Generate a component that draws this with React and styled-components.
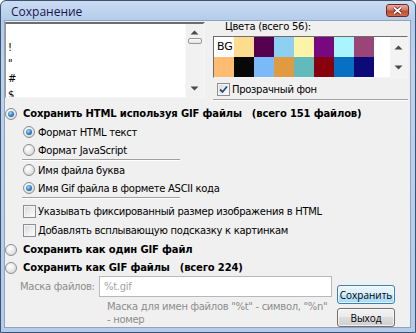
import React from 'react'
import styled, { createGlobalStyle } from 'styled-components'

const GlobalStyle = createGlobalStyle`
  html, body { margin: 0; padding: 0; background: #ffffff; }
  body { width: 416px; height: 333px; overflow: hidden; }
`

const listItems = ['\u00a0', '!', '"', '#', '$']

const palette = [
  ['#ffffff', '#fddc8e', '#560050', '#8ed0f2', '#fcf4a8', '#78087f', '#aaf4fd', '#9a4578'],
  ['#fcbd72', '#080808', '#7abaf8', '#e09a42', '#62baba', '#86000e', '#0870c2', '#0c0a78'],
  ['#a8e4a0', '#3a5ab8', '#c8c8f0', '#5a4fb8', '#8fd8b8', '#4878c8', '#5080d0', '#2a3a98'],
]

const Window = styled.div`
  width: 416px;
  height: 333px;
  box-sizing: border-box;
  border: 1px solid #3d5270;
  border-radius: 6px 6px 0 0;
  background: linear-gradient(to bottom, #cadcf2 0px, #b2cbea 21px, #bcd2ed 60px, #b4cbe9 100%);
  padding: 0 4px 4px 3px;
  display: flex;
  flex-direction: column;
  font-family: "DejaVu Sans", sans-serif;
  font-size: 10px;
  letter-spacing: -0.3px;
  color: #000;
`

const TitleBar = styled.div`
  height: 21px;
  display: flex;
  align-items: center;
  justify-content: space-between;
  padding: 0 2px 0 7px;
`

const Title = styled.span`
  font-family: "Open Sans", "Noto Sans", sans-serif;
  font-size: 12px;
  letter-spacing: 0;
  color: #17174f;
  padding-top: 2px;
`

const CloseButton = styled.div`
  width: 23px;
  height: 13px;
  box-sizing: border-box;
  border: 1px solid #6b2a22;
  border-radius: 3px;
  background: linear-gradient(to bottom, #e8ab9c 0%, #d57a66 45%, #c4472f 55%, #d06d52 100%);
  display: flex;
  align-items: center;
  justify-content: center;
`

const Client = styled.div`
  flex: 1;
  box-sizing: border-box;
  background: #f0f0f0;
  border: 1px solid #8fa3bd;
  display: flex;
  flex-direction: column;
`

const TopSection = styled.div`
  display: grid;
  grid-template-columns: 200px 197px;
  column-gap: 8px;
`

const ListBox = styled.div`
  margin-top: 1px;
  height: 76px;
  box-sizing: border-box;
  background: #ffffff;
  border-style: solid;
  border-width: 2px 2px 1px 1px;
  border-color: #6d6d6d #f4f4f4 #f4f4f4 #9a9a9a;
  display: flex;
  overflow: hidden;
`

const ListItems = styled.div`
  flex: 1;
  padding-left: 2px;
  padding-top: 1px;
  line-height: 15.4px;
  font-size: 10px;
`

const ScrollBar = styled.div`
  width: 17px;
  flex: none;
  background: #f1f1f1;
  border-left: 1px solid #f8f8f8;
  display: flex;
  flex-direction: column;
  align-items: center;
  justify-content: space-between;
`

const ScrollButton = styled.div`
  width: 17px;
  height: ${p => p.$h || 17}px;
  display: flex;
  align-items: center;
  justify-content: center;
`

const Thumb = styled.div`
  width: 14px;
  height: 6px;
  box-sizing: border-box;
  border: 1px solid #9a9a9a;
  border-radius: 2px;
  background: linear-gradient(to bottom, #fbfbfb, #e2e2e2);
  margin-top: -17px;
  margin-bottom: 23px;
`

const ColorsPanel = styled.div`
  display: flex;
  flex-direction: column;
`

const ColorsLabel = styled.div`
  height: 12px;
  line-height: 12px;
  padding-left: 12px;
`

const ColorBox = styled.div`
  margin-top: 3px;
  width: 195px;
  height: 42px;
  box-sizing: border-box;
  background: #ffffff;
  border-style: solid;
  border-width: 1px;
  border-color: #6d6d6d #f4f4f4 #f4f4f4 #6d6d6d;
  display: flex;
  overflow: hidden;
`

const ColorGrid = styled.div`
  display: grid;
  grid-template-columns: repeat(8, 20px);
  grid-auto-rows: 20px;
  width: 176px;
  align-content: start;
`

const Swatch = styled.div`
  background: ${p => p.$color};
  font-size: 11px;
  line-height: 20px;
  padding-left: 3px;
  letter-spacing: 0;
`

const GridScroll = styled.div`
  width: 17px;
  flex: none;
  margin-left: auto;
  background: #f3f3f3;
  display: flex;
  flex-direction: column;
`

const Row = styled.label`
  display: flex;
  align-items: center;
  height: ${p => p.$h || 19}px;
  margin-top: ${p => p.$mt || 0}px;
  padding-left: ${p => p.$indent || 0}px;
  gap: ${p => p.$gap || 3}px;
  font-weight: ${p => (p.$bold ? 700 : 400)};
  letter-spacing: ${p => (p.$bold ? '-0.15px' : '-0.3px')};
  white-space: pre;
`

const RadioMark = styled.span`
  width: 12px;
  height: 12px;
  flex: none;
  box-sizing: border-box;
  border-radius: 50%;
  border: 1px solid #8b8e93;
  background: radial-gradient(circle at 40% 35%, #ffffff 0%, #e9e9e9 50%, #c9c9c9 100%);
  position: relative;
  &::after {
    content: '';
    display: ${p => (p.$checked ? 'block' : 'none')};
    position: absolute;
    left: 2px;
    top: 2px;
    width: 6px;
    height: 6px;
    border-radius: 50%;
    background: radial-gradient(circle at 40% 35%, #a8dcff 0%, #3f8ad2 45%, #0d3f78 100%);
  }
`

const CheckMark = styled.span`
  width: 13px;
  height: 13px;
  flex: none;
  box-sizing: border-box;
  border: 1px solid #8b8e93;
  background: linear-gradient(135deg, #d7d7d7 0%, #f4f4f4 70%, #ffffff 100%);
  box-shadow: inset 0 0 0 1px #f4f4f4;
  display: flex;
  align-items: center;
  justify-content: center;
`

const Separator = styled.div`
  height: 0;
  border-top: 1px solid #a0a0a0;
  border-bottom: 1px solid #ffffff;
  margin-left: ${p => p.$left || 0}px;
  width: ${p => p.$w}px;
  margin-bottom: ${p => p.$mb || 0}px;
`

const Options = styled.div`
  display: flex;
  flex-direction: column;
  margin-top: 3px;
`

const Bottom = styled.div`
  display: grid;
  grid-template-columns: 94px 233px 63px;
  grid-template-rows: 21px auto;
`

const MaskLabel = styled.div`
  color: #8d8d8d;
  padding-left: 15px;
  line-height: 21px;
`

const MaskInput = styled.div`
  box-sizing: border-box;
  height: 21px;
  border: 1px solid #b5b9bd;
  background: #ffffff;
  color: #a3a3a3;
  padding-left: 4px;
  line-height: 19px;
`

const Hint = styled.div`
  grid-column: 2;
  grid-row: 2;
  color: #8d8d8d;
  padding: 3px 0 0 8px;
  line-height: 13px;
`

const Buttons = styled.div`
  grid-column: 3;
  grid-row: 1 / span 2;
  margin-left: 5px;
  padding-top: 9px;
  display: flex;
  flex-direction: column;
  gap: 4px;
`

const Button = styled.div`
  height: 19px;
  box-sizing: border-box;
  border: 1px solid ${p => (p.$default ? '#3c7fb1' : '#707070')};
  border-radius: 3px;
  background: ${p =>
    p.$default
      ? 'linear-gradient(to bottom, #eaf6fd 0%, #d9f0fc 50%, #bee6fd 50%, #a7d9f5 100%)'
      : 'linear-gradient(to bottom, #f2f2f2 0%, #ebebeb 50%, #dddddd 50%, #cfcfcf 100%)'};
  box-shadow: inset 0 0 0 1px rgba(255, 255, 255, 0.7);
  display: flex;
  align-items: center;
  justify-content: center;
  font-family: "Open Sans", "Noto Sans", sans-serif;
  font-size: 10px;
  letter-spacing: 0;
`

function Arrow({ up }) {
  return (
    <svg width="9" height="5" viewBox="0 0 9 5">
      <path d={up ? 'M0.5 4.5 L4.5 0.5 L8.5 4.5 Z' : 'M0.5 0.5 L4.5 4.5 L8.5 0.5 Z'} fill="#4a4a4a" />
    </svg>
  )
}

function Tick() {
  return (
    <svg width="9" height="9" viewBox="0 0 9 9">
      <path d="M1 4.5 L3.5 7 L8 1.5" fill="none" stroke="#2c4b80" strokeWidth="1.8" />
    </svg>
  )
}

function Radio({ checked, bold, indent, h, gap, children }) {
  return (
    <Row $bold={bold} $indent={indent} $h={h} $gap={gap}>
      <RadioMark $checked={checked} />
      <span>{children}</span>
    </Row>
  )
}

function Check({ checked, indent, h, gap, mt, children }) {
  return (
    <Row $indent={indent} $h={h} $gap={gap} $mt={mt}>
      <CheckMark>{checked && <Tick />}</CheckMark>
      <span>{children}</span>
    </Row>
  )
}

export default function App() {
  return (
    <>
      <GlobalStyle />
      <Window>
        <TitleBar>
          <Title>Сохранение</Title>
          <CloseButton>
            <svg width="11" height="9" viewBox="0 0 11 9">
              <path d="M2 1.5 L9 7.5 M9 1.5 L2 7.5" stroke="#5b1b12" strokeWidth="3.4" />
              <path d="M2 1.5 L9 7.5 M9 1.5 L2 7.5" stroke="#ffffff" strokeWidth="1.8" />
            </svg>
          </CloseButton>
        </TitleBar>
        <Client>
          <TopSection>
            <ListBox>
              <ListItems>
                {listItems.map((c, i) => (
                  <div key={i}>{c}</div>
                ))}
              </ListItems>
              <ScrollBar>
                <ScrollButton><Arrow up /></ScrollButton>
                <Thumb />
                <ScrollButton><Arrow /></ScrollButton>
              </ScrollBar>
            </ListBox>
            <ColorsPanel>
              <ColorsLabel>Цвета (всего 56):</ColorsLabel>
              <ColorBox>
                <ColorGrid>
                  {palette.flat().map((c, i) => (
                    <Swatch key={i} $color={c}>{i === 0 ? 'BG' : ''}</Swatch>
                  ))}
                </ColorGrid>
                <GridScroll>
                  <ScrollButton $h={20}><Arrow up /></ScrollButton>
                  <ScrollButton $h={20}><Arrow /></ScrollButton>
                </GridScroll>
              </ColorBox>
              <Check checked h={20} indent={4} gap={2} mt={1}>Прозрачный фон</Check>
              <Separator $w={195} />
            </ColorsPanel>
          </TopSection>
          <Options>
            <Radio checked bold indent={-1} gap={6}>Сохранить HTML используя GIF файлы   (всего 151 файлов)</Radio>
            <Radio checked indent={18} h={18}>Формат HTML текст</Radio>
            <Radio indent={18} h={18}>Формат JavaScript</Radio>
            <Separator $left={17} $w={158} />
            <Radio indent={18} h={18}>Имя файла буква</Radio>
            <Radio checked indent={18} h={18}>Имя Gif файла в формете ASCII кода</Radio>
            <Separator $left={17} $w={158} $mb={3} />
            <Check indent={18} gap={2}>Указывать фиксированный размер изображения в HTML</Check>
            <Check indent={18} gap={2}>Добавлять всплывающую подсказку к картинкам</Check>
            <Radio bold indent={-1} gap={6}>Сохранить как один GIF файл</Radio>
            <Radio bold indent={-1} gap={6} h={17}>Сохранить как GIF файлы   (всего 224)</Radio>
          </Options>
          <Bottom>
            <MaskLabel>Маска файлов:</MaskLabel>
            <MaskInput>%t.gif</MaskInput>
            <Hint>Маска для имен файлов "%t" - символ, "%n" - номер</Hint>
            <Buttons>
              <Button $default>Сохранить</Button>
              <Button>Выход</Button>
            </Buttons>
          </Bottom>
        </Client>
      </Window>
    </>
  )
}
